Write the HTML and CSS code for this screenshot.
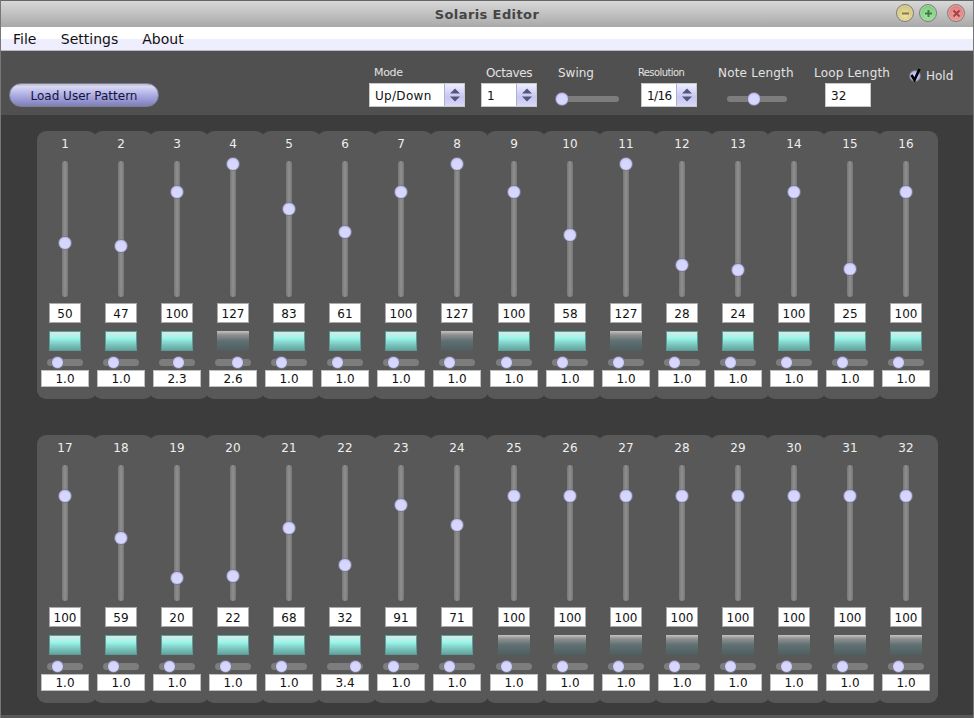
FILE: index.html
```html
<!DOCTYPE html>
<html lang="en">
<head>
<meta charset="utf-8">
<title>Solaris Editor</title>
<link rel="stylesheet" href="styles.css">
</head>
<body>
<div class="window">
  <header class="titlebar">
    <h1 class="title">Solaris Editor</h1>
    <div class="winbtns">
      <span class="winbtn min"><svg viewBox="0 0 9 9" width="9" height="9"><path d="M1 4.5H8" class="glyph"/></svg></span>
      <span class="winbtn max"><svg viewBox="0 0 9 9" width="9" height="9"><path d="M1 4.5H8M4.5 1V8" class="glyph"/></svg></span>
      <span class="winbtn close"><svg viewBox="0 0 9 9" width="9" height="9"><path d="M1.5 1.5L7.5 7.5M7.5 1.5L1.5 7.5" class="glyph"/></svg></span>
    </div>
  </header>
  <nav class="menubar"><span class="menu">File</span><span class="menu">Settings</span><span class="menu">About</span></nav>
  <section class="toolbar">
    <button class="load">Load User Pattern</button>
    <div class="ctl c-mode"><span class="lbl l-mode">Mode</span>
      <div class="combo w-mode"><span class="combo-text t-updown">Up/Down</span><span class="spin"><svg viewBox="0 0 10 14" width="10" height="14"><path d="M5 0.5L10 5.5H0ZM0 8.5H10L5 13.5Z" class="arrows"/></svg></span></div></div>
    <div class="ctl c-oct"><span class="lbl l-oct">Octaves</span>
      <div class="combo w-small"><span class="combo-text">1</span><span class="spin"><svg viewBox="0 0 10 14" width="10" height="14"><path d="M5 0.5L10 5.5H0ZM0 8.5H10L5 13.5Z" class="arrows"/></svg></span></div></div>
    <div class="ctl c-swing"><span class="lbl l-swing">Swing</span>
      <div class="tslider s-swing"><i class="thumb t-swing"></i></div></div>
    <div class="ctl c-res"><span class="lbl l-res">Resolution</span>
      <div class="combo w-small"><span class="combo-text t-res">1/16</span><span class="spin"><svg viewBox="0 0 10 14" width="10" height="14"><path d="M5 0.5L10 5.5H0ZM0 8.5H10L5 13.5Z" class="arrows"/></svg></span></div></div>
    <div class="ctl c-note"><span class="lbl l-wide">Note Length</span>
      <div class="tslider s-note"><i class="thumb t-note"></i></div></div>
    <div class="ctl c-loop"><span class="lbl l-wide">Loop Length</span>
      <div class="loopbox">32</div></div>
    <div class="hold"><span class="radio"><svg class="tick" viewBox="0 0 12 14" width="12" height="14"><path d="M1.5 7L4.5 12L9.5 1" class="tickpath"/></svg></span><span class="hold-text">Hold</span></div>
  </section>
  <main class="main">
    <div class="panel">
      <div class="cell"><span class="num">1</span><div class="vtrack"><i class="thumb vt" style="--v:50"></i></div><div class="val">50</div><div class="toggle on"></div><div class="htrack"><i class="thumb ht" style="--r:1"></i></div><div class="rate">1.0</div></div>
      <div class="cell"><span class="num">2</span><div class="vtrack"><i class="thumb vt" style="--v:47"></i></div><div class="val">47</div><div class="toggle on"></div><div class="htrack"><i class="thumb ht" style="--r:1"></i></div><div class="rate">1.0</div></div>
      <div class="cell"><span class="num">3</span><div class="vtrack"><i class="thumb vt" style="--v:100"></i></div><div class="val">100</div><div class="toggle on"></div><div class="htrack"><i class="thumb ht" style="--r:2.3"></i></div><div class="rate">2.3</div></div>
      <div class="cell"><span class="num">4</span><div class="vtrack"><i class="thumb vt" style="--v:127"></i></div><div class="val">127</div><div class="toggle off"></div><div class="htrack"><i class="thumb ht" style="--r:2.6"></i></div><div class="rate">2.6</div></div>
      <div class="cell"><span class="num">5</span><div class="vtrack"><i class="thumb vt" style="--v:83"></i></div><div class="val">83</div><div class="toggle on"></div><div class="htrack"><i class="thumb ht" style="--r:1"></i></div><div class="rate">1.0</div></div>
      <div class="cell"><span class="num">6</span><div class="vtrack"><i class="thumb vt" style="--v:61"></i></div><div class="val">61</div><div class="toggle on"></div><div class="htrack"><i class="thumb ht" style="--r:1"></i></div><div class="rate">1.0</div></div>
      <div class="cell"><span class="num">7</span><div class="vtrack"><i class="thumb vt" style="--v:100"></i></div><div class="val">100</div><div class="toggle on"></div><div class="htrack"><i class="thumb ht" style="--r:1"></i></div><div class="rate">1.0</div></div>
      <div class="cell"><span class="num">8</span><div class="vtrack"><i class="thumb vt" style="--v:127"></i></div><div class="val">127</div><div class="toggle off"></div><div class="htrack"><i class="thumb ht" style="--r:1"></i></div><div class="rate">1.0</div></div>
      <div class="cell"><span class="num">9</span><div class="vtrack"><i class="thumb vt" style="--v:100"></i></div><div class="val">100</div><div class="toggle on"></div><div class="htrack"><i class="thumb ht" style="--r:1"></i></div><div class="rate">1.0</div></div>
      <div class="cell"><span class="num">10</span><div class="vtrack"><i class="thumb vt" style="--v:58"></i></div><div class="val">58</div><div class="toggle on"></div><div class="htrack"><i class="thumb ht" style="--r:1"></i></div><div class="rate">1.0</div></div>
      <div class="cell"><span class="num">11</span><div class="vtrack"><i class="thumb vt" style="--v:127"></i></div><div class="val">127</div><div class="toggle off"></div><div class="htrack"><i class="thumb ht" style="--r:1"></i></div><div class="rate">1.0</div></div>
      <div class="cell"><span class="num">12</span><div class="vtrack"><i class="thumb vt" style="--v:28"></i></div><div class="val">28</div><div class="toggle on"></div><div class="htrack"><i class="thumb ht" style="--r:1"></i></div><div class="rate">1.0</div></div>
      <div class="cell"><span class="num">13</span><div class="vtrack"><i class="thumb vt" style="--v:24"></i></div><div class="val">24</div><div class="toggle on"></div><div class="htrack"><i class="thumb ht" style="--r:1"></i></div><div class="rate">1.0</div></div>
      <div class="cell"><span class="num">14</span><div class="vtrack"><i class="thumb vt" style="--v:100"></i></div><div class="val">100</div><div class="toggle on"></div><div class="htrack"><i class="thumb ht" style="--r:1"></i></div><div class="rate">1.0</div></div>
      <div class="cell"><span class="num">15</span><div class="vtrack"><i class="thumb vt" style="--v:25"></i></div><div class="val">25</div><div class="toggle on"></div><div class="htrack"><i class="thumb ht" style="--r:1"></i></div><div class="rate">1.0</div></div>
      <div class="cell"><span class="num">16</span><div class="vtrack"><i class="thumb vt" style="--v:100"></i></div><div class="val">100</div><div class="toggle on"></div><div class="htrack"><i class="thumb ht" style="--r:1"></i></div><div class="rate">1.0</div></div>
    </div>
    <div class="panel">
      <div class="cell"><span class="num">17</span><div class="vtrack"><i class="thumb vt" style="--v:100"></i></div><div class="val">100</div><div class="toggle on"></div><div class="htrack"><i class="thumb ht" style="--r:1"></i></div><div class="rate">1.0</div></div>
      <div class="cell"><span class="num">18</span><div class="vtrack"><i class="thumb vt" style="--v:59"></i></div><div class="val">59</div><div class="toggle on"></div><div class="htrack"><i class="thumb ht" style="--r:1"></i></div><div class="rate">1.0</div></div>
      <div class="cell"><span class="num">19</span><div class="vtrack"><i class="thumb vt" style="--v:20"></i></div><div class="val">20</div><div class="toggle on"></div><div class="htrack"><i class="thumb ht" style="--r:1"></i></div><div class="rate">1.0</div></div>
      <div class="cell"><span class="num">20</span><div class="vtrack"><i class="thumb vt" style="--v:22"></i></div><div class="val">22</div><div class="toggle on"></div><div class="htrack"><i class="thumb ht" style="--r:1"></i></div><div class="rate">1.0</div></div>
      <div class="cell"><span class="num">21</span><div class="vtrack"><i class="thumb vt" style="--v:68"></i></div><div class="val">68</div><div class="toggle on"></div><div class="htrack"><i class="thumb ht" style="--r:1"></i></div><div class="rate">1.0</div></div>
      <div class="cell"><span class="num">22</span><div class="vtrack"><i class="thumb vt" style="--v:32"></i></div><div class="val">32</div><div class="toggle on"></div><div class="htrack"><i class="thumb ht" style="--r:3.4"></i></div><div class="rate">3.4</div></div>
      <div class="cell"><span class="num">23</span><div class="vtrack"><i class="thumb vt" style="--v:91"></i></div><div class="val">91</div><div class="toggle on"></div><div class="htrack"><i class="thumb ht" style="--r:1"></i></div><div class="rate">1.0</div></div>
      <div class="cell"><span class="num">24</span><div class="vtrack"><i class="thumb vt" style="--v:71"></i></div><div class="val">71</div><div class="toggle on"></div><div class="htrack"><i class="thumb ht" style="--r:1"></i></div><div class="rate">1.0</div></div>
      <div class="cell"><span class="num">25</span><div class="vtrack"><i class="thumb vt" style="--v:100"></i></div><div class="val">100</div><div class="toggle off"></div><div class="htrack"><i class="thumb ht" style="--r:1"></i></div><div class="rate">1.0</div></div>
      <div class="cell"><span class="num">26</span><div class="vtrack"><i class="thumb vt" style="--v:100"></i></div><div class="val">100</div><div class="toggle off"></div><div class="htrack"><i class="thumb ht" style="--r:1"></i></div><div class="rate">1.0</div></div>
      <div class="cell"><span class="num">27</span><div class="vtrack"><i class="thumb vt" style="--v:100"></i></div><div class="val">100</div><div class="toggle off"></div><div class="htrack"><i class="thumb ht" style="--r:1"></i></div><div class="rate">1.0</div></div>
      <div class="cell"><span class="num">28</span><div class="vtrack"><i class="thumb vt" style="--v:100"></i></div><div class="val">100</div><div class="toggle off"></div><div class="htrack"><i class="thumb ht" style="--r:1"></i></div><div class="rate">1.0</div></div>
      <div class="cell"><span class="num">29</span><div class="vtrack"><i class="thumb vt" style="--v:100"></i></div><div class="val">100</div><div class="toggle off"></div><div class="htrack"><i class="thumb ht" style="--r:1"></i></div><div class="rate">1.0</div></div>
      <div class="cell"><span class="num">30</span><div class="vtrack"><i class="thumb vt" style="--v:100"></i></div><div class="val">100</div><div class="toggle off"></div><div class="htrack"><i class="thumb ht" style="--r:1"></i></div><div class="rate">1.0</div></div>
      <div class="cell"><span class="num">31</span><div class="vtrack"><i class="thumb vt" style="--v:100"></i></div><div class="val">100</div><div class="toggle off"></div><div class="htrack"><i class="thumb ht" style="--r:1"></i></div><div class="rate">1.0</div></div>
      <div class="cell"><span class="num">32</span><div class="vtrack"><i class="thumb vt" style="--v:100"></i></div><div class="val">100</div><div class="toggle off"></div><div class="htrack"><i class="thumb ht" style="--r:1"></i></div><div class="rate">1.0</div></div>
    </div>
  </main>
  <div class="bottomstrip"></div>
</div>
</body>
</html>
```
FILE: styles.css
```css
* { box-sizing: border-box; }
html, body { margin: 0; height: 100%; overflow: hidden; background: #505050; }
body { font-family: "DejaVu Sans", Verdana, sans-serif; }
.window { width: 974px; height: 718px; display: flex; flex-direction: column; border-left: 1px solid #777; border-right: 1px solid #777; }

.titlebar { height: 27px; flex: none; position: relative; display: flex; align-items: center; justify-content: center; background: linear-gradient(#d8d8d8, #a9a9a9); border-top: 1px solid #666; }
.title { margin: 1px 0 0; font-size: 13px; font-weight: bold; color: #444; line-height: 25px; letter-spacing: 0.4px; }
.winbtns { position: absolute; left: 895px; top: 3px; display: flex; }
.winbtn { width: 18px; height: 18px; border-radius: 50%; display: flex; align-items: center; justify-content: center; border: 1px solid #7f7f72; box-shadow: 0 0 0 1px rgba(230,230,230,.45) inset; }
.winbtn.min { background: radial-gradient(circle at 50% 65%, #eee2a2, #c8b66c); }
.winbtn.max { background: radial-gradient(circle at 50% 65%, #a8e8a8, #68bf68); margin-left: 5px; }
.winbtn.close { background: radial-gradient(circle at 50% 65%, #f5a2a2, #dc6c6c); margin-left: 10px; }
.glyph { fill: none; stroke-width: 2; stroke: rgba(90,80,50,.7); }
.max .glyph { stroke: rgba(30,90,40,.75); }
.close .glyph { stroke: rgba(130,40,40,.75); }

.menubar { height: 24px; flex: none; display: flex; padding-left: 12px; gap: 24px; align-items: center; background: linear-gradient(#fff 50%, #eeeeff 50%); border-bottom: 1px solid #bbb; }
.menu { font-size: 14px; color: #111; line-height: 24px; }
.menu:first-child { margin-right: 0.4px; }

.toolbar { height: 64px; flex: none; display: flex; align-items: flex-start; background: #505050; }
.load { margin: 32px 0 0 8px; width: 150px; height: 24px; padding: 2px 0 0; font: 12px "DejaVu Sans", sans-serif; color: #14143a; border: 1px solid #7d7d95; border-radius: 12px; background: linear-gradient(#b9b9cf, #d9d9f2 12%, #b8b8ea 40%, #9a9ad6 70%, #7f7fb4); }

.ctl { display: flex; flex-direction: column; padding-top: 15px; }
.lbl { height: 14px; line-height: 14px; font-size: 12px; color: #e2e2e2; white-space: nowrap; margin-bottom: 3px; }
.l-wide { letter-spacing: 0.2px; }
.c-mode { margin-left: 210px; width: 96px; }
.l-mode { font-size: 11px; padding-left: 5px; letter-spacing: -0.3px; }
.c-oct { margin-left: 16px; width: 56px; }
.l-oct { padding-left: 5px; letter-spacing: -0.4px; }
.c-swing { margin-left: 19px; width: 63px; }
.l-swing { padding-left: 2px; }
.c-res { margin-left: 22px; width: 56px; }
.l-res { font-family: "DejaVu Sans Condensed", "DejaVu Sans", sans-serif; font-size: 11px; letter-spacing: -0.55px; margin-left: -3px; }
.c-note { margin-left: 21px; width: 75px; }
.c-loop { margin-left: 21px; width: 76px; }

.combo { height: 24px; display: flex; background: #fff; border: 1px solid #c8c8c8; }
.w-mode { width: 96px; }
.w-small { width: 56px; }
.combo-text { flex: 1; font-size: 12px; line-height: 24px; padding-left: 5px; color: #111; }
.t-updown { letter-spacing: 0.3px; }
.t-res { letter-spacing: -0.6px; }
.spin { width: 20px; display: flex; align-items: center; justify-content: center; background: linear-gradient(#eeeeff, #c6c6f2 60%, #d8d8f8); border-left: 1px solid #b0b0d0; }
.arrows { fill: #55557a; }

.tslider { position: relative; height: 6px; margin-top: 13px; border-radius: 3px; background: #7d7d7d; }
.s-swing { width: 63px; }
.s-note { width: 60px; margin-left: 9px; }
.t-swing { left: -1px; }
.t-note { left: 20px; }
.loopbox { width: 46px; height: 24px; margin-left: 11px; font-size: 12px; line-height: 24px; padding-left: 5px; color: #111; background: #fff; border: 1px solid #c8c8c8; }

.hold { display: flex; align-items: center; margin: 17px 0 0 19px; }
.radio { position: relative; width: 12px; height: 12px; border-radius: 50%; background: radial-gradient(#d4d4ff, #a4a4e0); border: 1px solid #777; }
.tick { position: absolute; left: 0; top: -3px; }
.tickpath { fill: none; stroke: #000; stroke-width: 2.6; }
.hold-text { margin-left: 5px; font-size: 12px; line-height: 16px; color: #e2e2e2; }

.main { flex: 1; background: #3c3c3c; padding: 16px 0 0 36px; display: flex; flex-direction: column; gap: 36px; }
.panel { display: flex; height: 268px; }
.cell { flex: none; width: 60px; height: 268px; margin-right: -4px; padding: 5px 4px 0 0; display: flex; flex-direction: column; align-items: center; background: #585858; border-radius: 9px; }
.cell:nth-child(8) { margin-right: -3px; }
.num { height: 16px; line-height: 16px; font-size: 12px; color: #efefef; }
.vtrack { position: relative; width: 6px; height: 136px; margin-top: 9px; border-radius: 3px; background: linear-gradient(90deg, #777, #8f8f8f 50%, #777); }
.val { width: 32px; height: 20px; margin-top: 6px; padding-top: 1px; font-size: 12px; line-height: 18px; text-align: center; color: #111; background: #fff; border: 1px solid #aaa; }
.toggle { width: 32px; height: 20px; margin-top: 8px; border: 1px solid transparent; background-origin: border-box; }
.toggle.on { border-color: #5d9d97; background-image: linear-gradient(#dcebe8, #c5eee9 14%, #9cf5ea 36%, #79c4bc 70%, #5e9f99); }
.toggle.off { background-image: linear-gradient(#c4c4c4, #8e8e8e 20%, #5f7072 50%, #4f5f61); }
.htrack { position: relative; width: 36px; height: 7px; margin-top: 8px; border-radius: 3.5px; background: #7d7d7d; }
.rate { width: 48px; height: 17px; margin-top: 4px; font-size: 12px; line-height: 16px; text-align: center; color: #111; background: #fff; border: 1px solid #c0c0c0; }

.thumb { position: absolute; display: block; width: 14px; height: 14px; top: -4px; border-radius: 50%; background: radial-gradient(circle at 50% 55%, #d6d6ff 45%, #b4b4ee); border: 1px solid #7a7a8a; }
.thumb.vt { left: -4px; top: calc(-4px + (127 - var(--v)) * 1.025px); }
.thumb.ht { width: 13px; height: 13px; top: -3px; left: calc(3.5px + (var(--r) - 1) * 7.6px); }

.bottomstrip { height: 3px; flex: none; background: #585858; }
```
